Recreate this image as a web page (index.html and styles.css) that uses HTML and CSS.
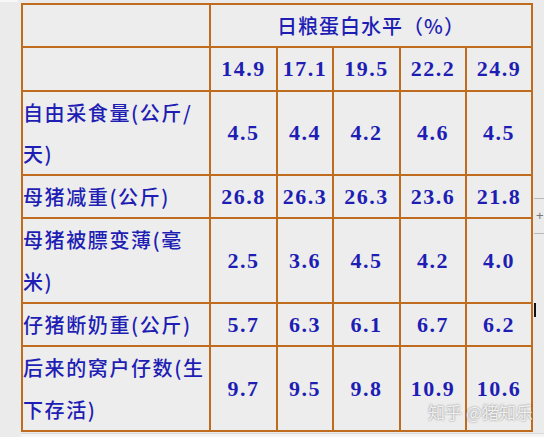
FILE: index.html
```html
<!DOCTYPE html>
<html lang="zh">
<head>
<meta charset="utf-8">
<link rel="stylesheet" href="styles.css">
</head>
<body>
<div class="page">
  <div class="topstrip"></div>
  <table class="grid">
    <colgroup>
      <col class="c-label"><col class="c-a"><col class="c-b"><col class="c-a"><col class="c-c"><col class="c-c">
    </colgroup>
    <tr class="r1"><td class="label"></td><td class="head" colspan="5">日粮蛋白水平（%）</td></tr>
    <tr class="r1"><td class="label"></td><td class="num">14.9</td><td class="num">17.1</td><td class="num">19.5</td><td class="num">22.2</td><td class="num">24.9</td></tr>
    <tr><td class="label">自由采食量(公斤/<br>天)</td><td class="num">4.5</td><td class="num">4.4</td><td class="num">4.2</td><td class="num">4.6</td><td class="num">4.5</td></tr>
    <tr class="r1"><td class="label">母猪减重(公斤)</td><td class="num">26.8</td><td class="num">26.3</td><td class="num">26.3</td><td class="num">23.6</td><td class="num">21.8</td></tr>
    <tr><td class="label">母猪被膘变薄(毫<br>米)</td><td class="num">2.5</td><td class="num">3.6</td><td class="num">4.5</td><td class="num">4.2</td><td class="num">4.0</td></tr>
    <tr class="r1"><td class="label">仔猪断奶重(公斤)</td><td class="num">5.7</td><td class="num">6.3</td><td class="num">6.1</td><td class="num">6.7</td><td class="num">6.2</td></tr>
    <tr><td class="label">后来的窝户仔数(生<br>下存活)</td><td class="num">9.7</td><td class="num">9.5</td><td class="num">9.8</td><td class="num">10.9</td><td class="num">10.6</td></tr>
  </table>
  <div class="bottom-strip"></div>
  <div class="side-lines"><span class="plus">+</span></div>
  <div class="cursor"></div>
  <div class="watermark">知乎 @猪知乐</div>
</div>
</body>
</html>
```
FILE: styles.css
```css
html, body {
  margin: 0;
  padding: 0;
  background: #ececec;
}
.page {
  position: relative;
  width: 544px;
  height: 437px;
  overflow: hidden;
  background: #ebebeb;
  padding: 3px 0 0 21px;
  box-sizing: border-box;
}
.topstrip {
  position: absolute;
  left: 0;
  top: 0;
  width: 18px;
  height: 2px;
  background: #f8f8f8;
}
.grid {
  border-collapse: collapse;
  table-layout: fixed;
  width: 510px;
  background: #ededed;
  color: #1e1eb4;
  font-family: "Noto Sans CJK SC", sans-serif;
}
.c-label { width: 188px; }
.c-a { width: 67px; }
.c-b { width: 56px; }
.c-c { width: 66px; }
.grid td {
  border: 2px solid #bf6c1e;
  padding: 0;
  line-height: 41.3px;
  font-size: 20px;
  white-space: nowrap;
  overflow: visible;
}
.grid td.label {
  text-align: left;
  letter-spacing: 1.6px;
  font-weight: 500;
}
.grid td.head {
  text-align: center;
  font-weight: 500;
  letter-spacing: 1px;
}
.grid td.num {
  text-align: center;
  font-family: "Liberation Serif", serif;
  font-weight: bold;
  font-size: 22px;
  letter-spacing: 1.5px;
}
.bottom-strip {
  margin-top: 1px;
  height: 4px;
  background: #f4f4f4;
  border-top: 1px solid #d8d8d8;
}
.side-lines {
  position: absolute;
  left: 534px;
  top: 198px;
  width: 10px;
  height: 34px;
  border-top: 1px solid #b9b9b9;
  border-bottom: 1px solid #b9b9b9;
  font-family: "Liberation Sans", sans-serif;
  font-size: 13px;
  color: #777;
  line-height: 34px;
}
.plus { padding-left: 2px; }
.cursor {
  position: absolute;
  left: 534px;
  top: 303px;
  width: 2px;
  height: 14px;
  background: #111;
}
.watermark {
  position: absolute;
  left: 428px;
  top: 403px;
  line-height: 17px;
  font-family: "Noto Sans CJK SC", sans-serif;
  font-size: 17px;
  color: rgba(255, 255, 255, 0.85);
  text-shadow: 0 0 2px rgba(0, 0, 0, 0.5);
}
```
